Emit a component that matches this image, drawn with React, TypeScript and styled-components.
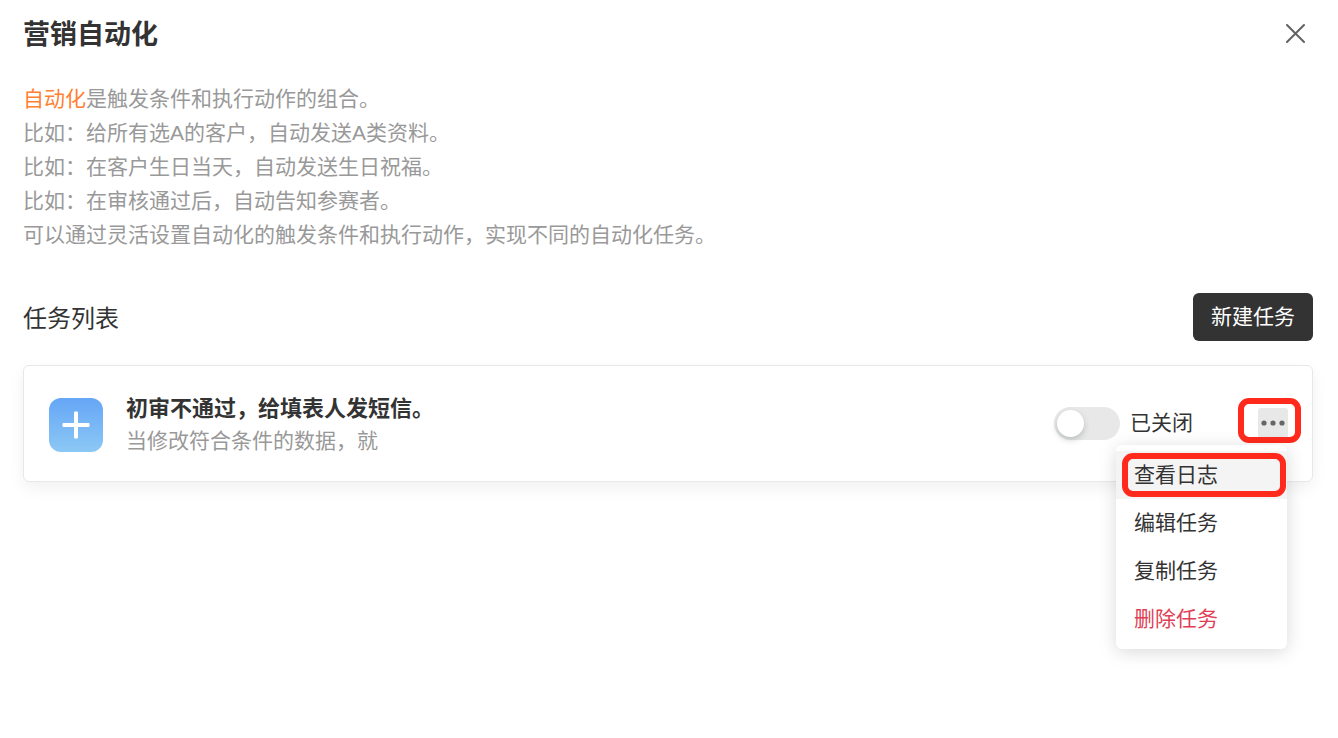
import React, { useState } from "react";
import styled, { createGlobalStyle, css } from "styled-components";

const GlobalStyle = createGlobalStyle`
  *, *::before, *::after { box-sizing: border-box; }
  body {
    margin: 0;
    background: #fff;
    color: #333;
    font-family: "Liberation Sans", "Noto Sans CJK SC", sans-serif;
    font-size: 21px;
    line-height: 32px;
  }
  button { font: inherit; cursor: pointer; }
`;

const Page = styled.main`
  min-height: 100vh;
  padding: 9px 25px 24px 23px;
`;

const Header = styled.header`
  display: flex;
  align-items: center;
  justify-content: space-between;
  height: 48px;
`;

const Title = styled.h1`
  margin: 0;
  font-family: "Noto Sans CJK SC", sans-serif;
  font-size: 27px;
  line-height: 36px;
  font-weight: 700;
`;

const CloseButton = styled.button`
  display: flex;
  align-items: center;
  justify-content: center;
  width: 36px;
  height: 36px;
  padding: 0;
  border: 0;
  background: none;
  color: #606266;
`;

const Description = styled.section`
  margin-top: 25px;
  color: #999;
`;

const Line = styled.p`
  margin: 0;
  line-height: 34px;
`;

const Accent = styled.span`
  color: #ff7f33;
`;

const ListHeader = styled.div`
  display: flex;
  align-items: center;
  justify-content: space-between;
  margin-top: 41px;
`;

const ListTitle = styled.h2`
  margin: 0;
  font-family: "Noto Sans CJK SC", sans-serif;
  font-size: 24px;
  line-height: 36px;
  font-weight: 400;
`;

const CreateButton = styled.button`
  height: 48px;
  padding: 0 18px;
  border: 0;
  border-radius: 6px;
  background: #333;
  color: #fff;
`;

const TaskCard = styled.article`
  display: flex;
  align-items: center;
  margin-top: 24px;
  padding: 27px 24px 24px 25px;
  border: 1px solid #e8e8e8;
  border-radius: 6px;
  background: #fff;
  box-shadow: 0 6px 16px rgba(0, 0, 0, 0.06);
`;

const TaskIcon = styled.div`
  display: flex;
  align-items: center;
  justify-content: center;
  width: 54px;
  height: 54px;
  border-radius: 12px;
  background: linear-gradient(#65a6f6, #8cc8f5);
`;

const TaskText = styled.div`
  flex: 1;
  min-width: 0;
  margin-left: 23px;
`;

const TaskName = styled.h3`
  margin: 0;
  font-size: 22px;
  line-height: 32px;
  font-weight: 700;
`;

const TaskSummary = styled.p`
  margin: 0;
  color: #999;
`;

const TaskControls = styled.div`
  display: flex;
  align-items: center;
  gap: 65px;
  padding-bottom: 4px;
`;

const SwitchLabel = styled.label`
  display: flex;
  align-items: center;
  gap: 10px;
  cursor: pointer;
`;

const Switch = styled.input`
  appearance: none;
  display: flex;
  align-items: center;
  width: 66px;
  height: 33px;
  margin: 0;
  padding: 0 3px;
  border-radius: 17px;
  background: #e8e8e8;
  cursor: pointer;

  &::before {
    content: "";
    width: 27px;
    height: 27px;
    border-radius: 50%;
    background: #fff;
    box-shadow: 0 3px 6px rgba(0, 35, 11, 0.2);
  }
  &:checked {
    justify-content: flex-end;
    background: #65a6f6;
  }
`;

const ring = css`
  &::after {
    content: "";
    position: absolute;
    border: 6px solid #ff2a1c;
    border-radius: 11px;
    pointer-events: none;
  }
`;

const MoreMenu = styled.div`
  position: relative;
  ${ring}
  &::after {
    inset: -10px -13px -5px -20px;
  }
`;

const MoreButton = styled.button`
  display: flex;
  align-items: center;
  justify-content: center;
  width: 30px;
  height: 30px;
  padding: 0;
  border: 0;
  border-radius: 3px;
  background: #e8e8e8;
  color: #666;
`;

const Menu = styled.ul`
  position: absolute;
  z-index: 2;
  top: 37px;
  right: 1px;
  width: 171px;
  margin: 0;
  padding: 6px 0;
  list-style: none;
  border-radius: 6px;
  background: #fff;
  box-shadow: 0 3px 18px rgba(0, 0, 0, 0.15);
`;

const MenuItem = styled.li<{ $marked?: boolean }>`
  position: relative;
  ${(p) =>
    p.$marked &&
    css`
      ${ring}
      &::after {
        inset: 2px 1px 2px 6px;
      }
    `}
`;

const MenuButton = styled.button<{ $active?: boolean; $danger?: boolean }>`
  display: block;
  width: 100%;
  height: 48px;
  padding: 0 18px;
  border: 0;
  background: ${(p) => (p.$active ? "#f4f4f4" : "transparent")};
  color: ${(p) => (p.$danger ? "#e03e55" : "#333")};
  text-align: left;
`;

const menuItems = [
  { label: "查看日志", active: true },
  { label: "编辑任务" },
  { label: "复制任务" },
  { label: "删除任务", danger: true },
];

const examples = [
  "比如：给所有选A的客户，自动发送A类资料。",
  "比如：在客户生日当天，自动发送生日祝福。",
  "比如：在审核通过后，自动告知参赛者。",
  "可以通过灵活设置自动化的触发条件和执行动作，实现不同的自动化任务。",
];

export default function App() {
  const [enabled, setEnabled] = useState(false);
  const [open, setOpen] = useState(true);

  return (
    <>
      <GlobalStyle />
      <Page lang="zh-CN">
        <Header>
          <Title>营销自动化</Title>
          <CloseButton aria-label="关闭">
            <svg width="20" height="20" viewBox="0 0 20 20" fill="none" stroke="currentColor" strokeWidth="2" strokeLinecap="round">
              <path d="M2 2L19 19M19 2L2 19" />
            </svg>
          </CloseButton>
        </Header>

        <Description>
          <Line>
            <Accent>自动化</Accent>是触发条件和执行动作的组合。
          </Line>
          {examples.map((text) => (
            <Line key={text}>{text}</Line>
          ))}
        </Description>

        <ListHeader>
          <ListTitle>任务列表</ListTitle>
          <CreateButton>新建任务</CreateButton>
        </ListHeader>

        <TaskCard>
          <TaskIcon>
            <svg width="28" height="28" viewBox="0 0 28 28" fill="#fff" aria-hidden="true">
              <rect x="0.5" y="12" width="27" height="4" rx="1" />
              <rect x="12" y="0.5" width="4" height="27" rx="1" />
            </svg>
          </TaskIcon>
          <TaskText>
            <TaskName>初审不通过，给填表人发短信。</TaskName>
            <TaskSummary>当修改符合条件的数据，就</TaskSummary>
          </TaskText>
          <TaskControls>
            <SwitchLabel>
              <Switch type="checkbox" checked={enabled} onChange={(e) => setEnabled(e.target.checked)} />
              {enabled ? "已开启" : "已关闭"}
            </SwitchLabel>
            <MoreMenu>
              <MoreButton aria-label="更多" aria-expanded={open} onClick={() => setOpen(!open)}>
                <svg width="24" height="6" viewBox="0 0 24 6" fill="currentColor" aria-hidden="true">
                  <circle cx="3" cy="3" r="2.6" />
                  <circle cx="12" cy="3" r="2.6" />
                  <circle cx="21" cy="3" r="2.6" />
                </svg>
              </MoreButton>
              {open && (
                <Menu>
                  {menuItems.map((item) => (
                    <MenuItem key={item.label} $marked={item.active}>
                      <MenuButton $active={item.active} $danger={item.danger}>
                        {item.label}
                      </MenuButton>
                    </MenuItem>
                  ))}
                </Menu>
              )}
            </MoreMenu>
          </TaskControls>
        </TaskCard>
      </Page>
    </>
  );
}
